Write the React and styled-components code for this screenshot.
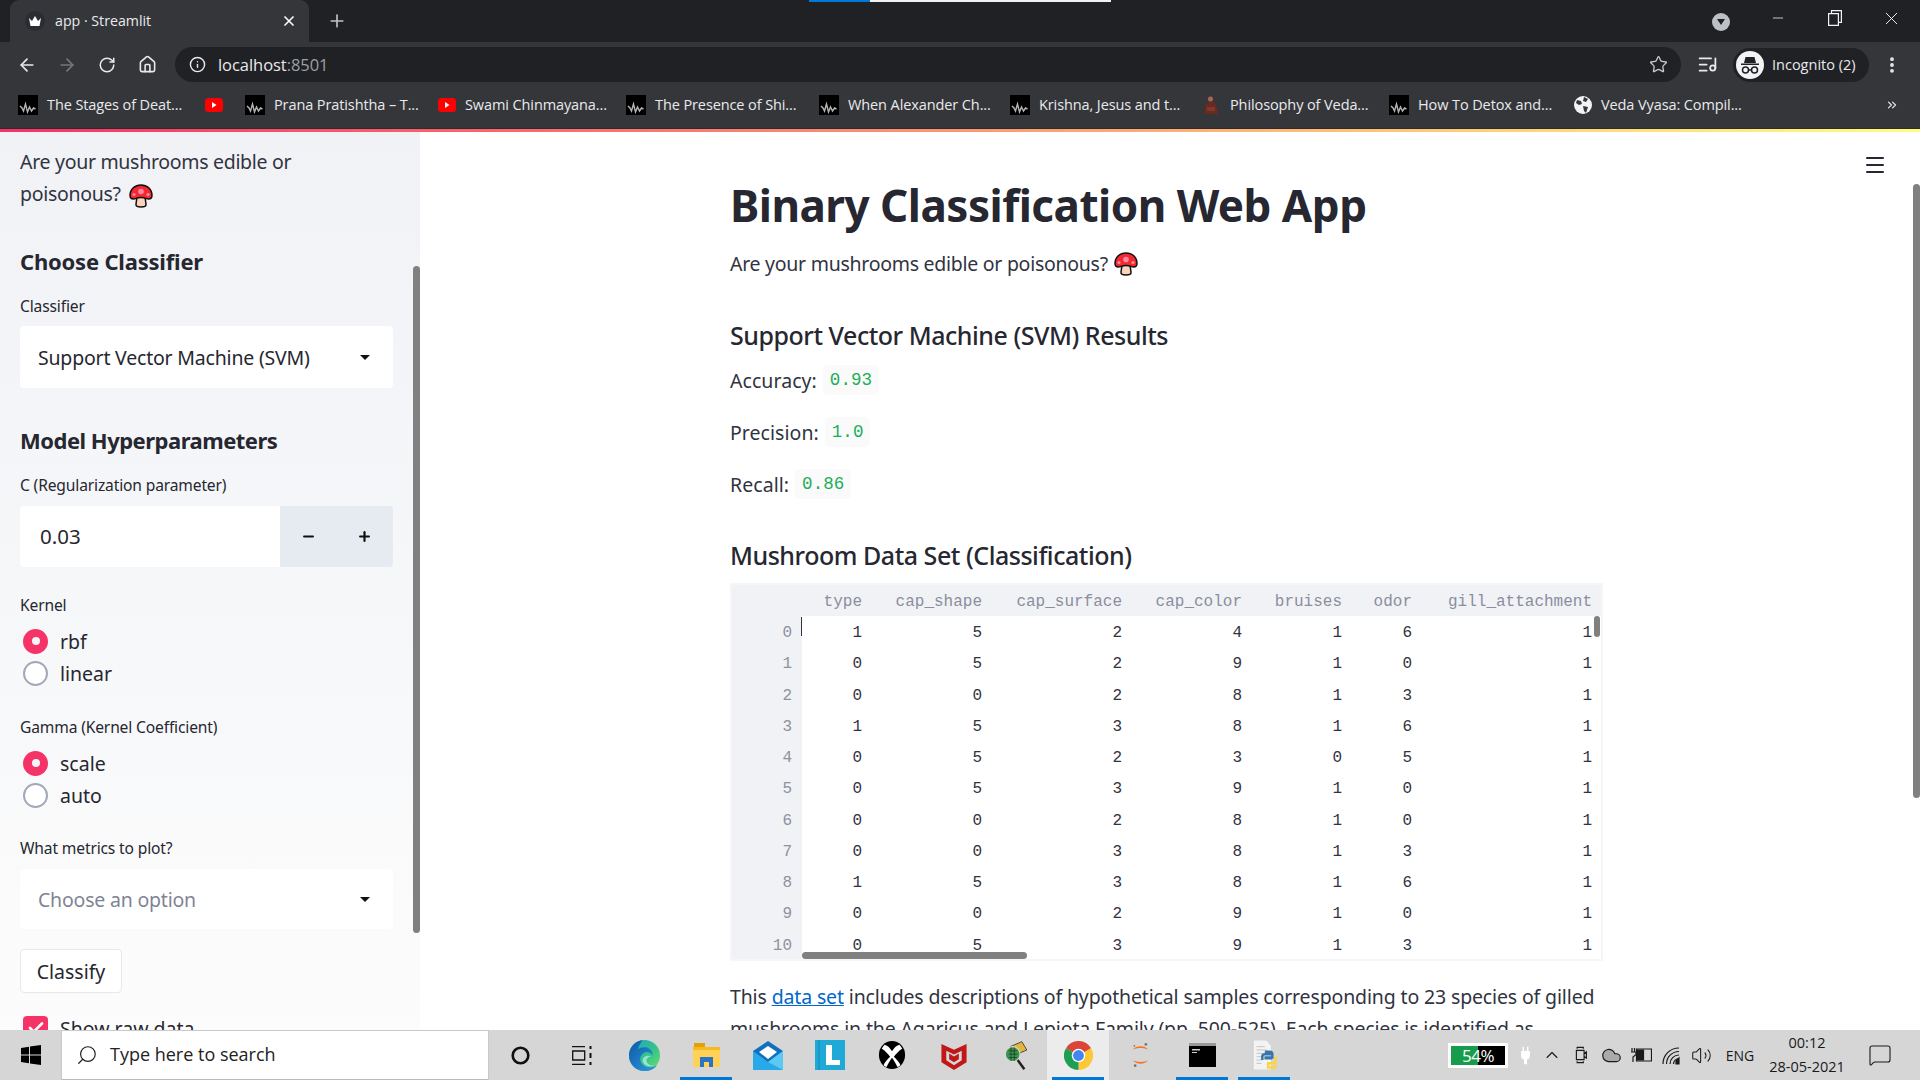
import React from "react";
import styled, { createGlobalStyle } from "styled-components";
import {
  ArrowLeft, ArrowRight, RotateCw, Home, Info, Star, ListMusic, MoreVertical, Menu, Plus, X, Minus,
  ChevronUp, Cloud, Volume2, MessageSquare, Search, Check, ChevronsRight
} from "lucide-react";

const SANS = `"Noto Sans", "Liberation Sans", sans-serif`;
const UI = `"Open Sans", "Liberation Sans", sans-serif`;
const MONO = `"Liberation Mono", monospace`;

const Global = createGlobalStyle`
  html, body { margin: 0; padding: 0; height: 100%; overflow: hidden; background: #fff; }
  #root { height: 100%; }
  * { box-sizing: border-box; }
`;

const Page = styled.div`display:flex;flex-direction:column;width:1920px;height:1080px;overflow:hidden;font-family:${SANS};color:#262730;`;

/* browser chrome */
const TabStrip = styled.div`position:relative;display:flex;align-items:stretch;height:42px;background:#202124;color:#fff;font-family:${UI};`;
const Progress = styled.div`position:absolute;top:0;left:${p => p.$left}px;width:${p => p.$width}px;height:2px;background:${p => p.$color};`;
const Tab = styled.div`display:flex;align-items:center;margin-left:10px;width:299px;background:#35363a;border-radius:9px 9px 0 0;padding:0 12px 0 15px;font-size:14.2px;color:#e8eaed;`;
const TabIcon = styled.span`display:flex;align-items:center;justify-content:center;width:20px;height:20px;border-radius:50%;background:#2a2b33;margin-right:10px;`;
const TabTitle = styled.span`flex:1;margin-bottom:2px;`;
const NewTab = styled.span`display:flex;align-items:center;margin-left:18px;color:#bdc1c6;`;
const Spacer = styled.div`flex:1;`;
const ProfileDot = styled.span`display:flex;align-items:center;justify-content:center;width:56px;height:44px;`;
const DotCircle = styled.span`width:18px;height:18px;border-radius:50%;background:#bdc1c6;display:flex;align-items:center;justify-content:center;`;
const DotArrow = styled.span`width:0;height:0;border-left:4.5px solid transparent;border-right:4.5px solid transparent;border-top:6px solid #202124;`;
const WinButton = styled.span`display:flex;align-items:center;justify-content:center;width:57px;height:36px;color:#f1f3f4;`;

const Toolbar = styled.div`display:flex;align-items:center;height:45px;padding-left:7px;background:#35363a;`;
const NavButton = styled.span`display:flex;align-items:center;justify-content:center;width:40px;color:${p => (p.$dim ? "#75777b" : "#e8eaed")};`;
const AddressBar = styled.div`display:flex;align-items:center;margin-left:8px;width:1506px;height:35px;border-radius:18px;background:#202124;padding:0 13px 0 14px;color:#e8eaed;font-family:${UI};font-size:16.5px;`;
const Host = styled.span`margin-left:12px;flex:1;letter-spacing:-.05px;`;
const Port = styled.span`color:#9aa0a6;`;
const StarWrap = styled.span`display:flex;color:#c4c7ca;`;
const MediaButton = styled.span`display:flex;justify-content:center;width:52px;color:#e8eaed;`;
const Pill = styled.div`display:flex;align-items:center;width:136px;height:34px;border-radius:17px;background:#202124;padding-left:3px;color:#e8eaed;font-family:${UI};font-size:14.5px;`;
const PillText = styled.span`margin-left:8px;`;
const DotsButton = styled.span`display:flex;justify-content:center;width:46px;color:#e8eaed;`;

const Bookmarks = styled.div`display:flex;align-items:flex-start;height:42px;padding:0 0 0 18px;background:#35363a;color:#e8eaed;font-family:${UI};font-size:14.5px;border-bottom:1px solid #2b2c2f;`;
const Bookmark = styled.div`display:flex;align-items:center;height:36px;width:${p => p.$width}px;flex:none;white-space:nowrap;letter-spacing:-.1px;`;
const BookmarkLabel = styled.span`margin-left:${p => p.$gap || 9}px;margin-bottom:2px;`;
const More = styled.span`display:flex;align-items:center;height:36px;margin-left:auto;margin-right:21px;color:#e8eaed;`;
const Rainbow = styled.div`height:3px;background:linear-gradient(90deg,#f63366,#fffd80);`;

/* app */
const AppArea = styled.div`position:relative;display:flex;flex:1;min-height:0;overflow:hidden;background:#fff;`;
const Sidebar = styled.aside`position:relative;width:420px;flex:none;padding:14px 27px 0 20px;background:linear-gradient(180deg,#f0f2f6,#fcfcfc);overflow:hidden;`;
const ScrollThumbSide = styled.div`position:absolute;right:0;top:134px;width:7px;height:667px;border-radius:4px;background:#808080;`;
const SideText = styled.p`margin:0;font-size:19.5px;line-height:32px;color:#31333f;letter-spacing:-.3px;`;
const SideTitle = styled.h3`margin:${p => p.$mt}px 0 0;font-size:22px;line-height:30px;font-weight:700;color:#262730;letter-spacing:${p => p.$ls}px;`;
const FieldLabel = styled.div`margin-top:${p => p.$mt}px;font-size:15.6px;line-height:20px;color:#262730;letter-spacing:-.15px;`;
const SelectBox = styled.div`display:flex;align-items:center;justify-content:space-between;margin-top:${p => p.$mt}px;height:${p => p.$h}px;background:#fff;border-radius:4px;padding:0 23px 0 18px;font-size:19.5px;letter-spacing:-.2px;color:${p => (p.$placeholder ? "#7f8495" : "#262730")};`;
const Caret = styled.span`width:0;height:0;border-left:5px solid transparent;border-right:5px solid transparent;border-top:5px solid #111;`;
const NumberField = styled.div`display:flex;margin-top:11px;height:61px;border-radius:4px;overflow:hidden;`;
const NumberValue = styled.div`display:flex;align-items:center;width:260px;background:#fff;padding:0 0 2px 20px;font-size:20.5px;`;
const Stepper = styled.div`display:flex;flex:1;background:#e6eaf1;`;
const StepButton = styled.span`display:flex;align-items:center;justify-content:center;flex:1;color:#111;`;
const RadioGroup = styled.div`margin-top:10px;`;
const OptionRow = styled.div`display:flex;align-items:center;height:32px;font-size:19.5px;padding-left:3px;margin-top:${p => p.$mt || 0}px;`;
const Radio = styled.span`display:flex;align-items:center;justify-content:center;width:25px;height:25px;border-radius:50%;margin-right:12px;background:${p => (p.$on ? "#f63366" : "#fff")};border:${p => (p.$on ? "none" : "2px solid #a3a8b8")};`;
const RadioDot = styled.span`width:8px;height:8px;border-radius:50%;background:#f3f4f7;`;
const Checkbox = styled.span`display:flex;align-items:center;justify-content:center;width:25px;height:25px;border-radius:4px;margin-right:12px;background:#f63366;color:#fff;`;
const ActionButton = styled.div`display:flex;align-items:center;justify-content:center;margin-top:20px;width:102px;height:44px;border:1px solid #e6e8ee;border-radius:4px;background:#fff;font-size:19.5px;`;

const Main = styled.main`position:relative;flex:1;padding:45px 0 0 310px;overflow:hidden;`;
const Column = styled.div`width:873px;`;
const HamburgerWrap = styled.span`position:absolute;top:21px;right:33px;display:flex;color:#262730;`;
const MainThumb = styled.div`position:absolute;right:0;top:52px;width:7px;height:614px;border-radius:4px;background:#808080;`;
const Title = styled.h1`margin:0;font-size:44px;line-height:56px;font-weight:700;color:#262730;white-space:nowrap;letter-spacing:-.5px;`;
const Tagline = styled.p`margin:15px 0 0;font-size:19.5px;line-height:32px;color:#31333f;display:flex;align-items:center;letter-spacing:-.27px;white-space:pre;`;
const SubTitle = styled.h3`margin:${p => p.$mt}px 0 0;font-size:25px;line-height:40px;font-weight:500;color:#262730;letter-spacing:-.47px;`;
const MetricRow = styled.div`display:flex;align-items:center;margin-top:${p => p.$mt}px;height:32px;font-size:19.5px;letter-spacing:.05px;color:#31333f;`;
const Code = styled.code`display:inline-flex;align-items:center;height:30px;margin-left:6px;padding:0 7px;border-radius:5px;background:#fafafa;color:#1aae57;font-family:${MONO};font-size:17.5px;`;
const Mush = styled.span`display:inline-flex;vertical-align:middle;margin:-6px 0 -6px 4px;`;
const TagMush = styled.span`display:inline-flex;margin-left:1px;`;

const DataFrame = styled.div`position:relative;margin-top:8px;width:873px;height:378px;border:2px solid #f6f6f6;overflow:hidden;`;
const Grid = styled.div`display:grid;grid-template-columns:70px 70px 120px 140px 120px 100px 70px 180px;grid-template-rows:31px;grid-auto-rows:31.25px;font-family:${MONO};font-size:16px;`;
const HeadCell = styled.div`display:flex;align-items:center;justify-content:flex-end;padding:3px 10px 0 0;background:#f0f2f6;color:#8b8e9c;`;
const IndexCell = styled.div`display:flex;align-items:center;justify-content:flex-end;padding:3px 10px 0 0;background:#f0f2f6;color:#8f919c;`;
const DataCell = styled.div`display:flex;align-items:center;justify-content:flex-end;padding:3px 10px 0 0;background:#fff;color:#31333f;`;
const HThumb = styled.div`position:absolute;left:70px;bottom:0;width:225px;height:7px;border-radius:4px;background:#808080;`;
const VThumb = styled.div`position:absolute;right:1px;top:31px;width:6px;height:21px;border-radius:3px;background:#808080;`;
const CellCursor = styled.div`position:absolute;left:69px;top:32px;width:1px;height:19px;background:#31333f;`;
const Paragraph = styled.p`margin:20px 0 0;font-size:19.5px;line-height:32px;color:#31333f;white-space:nowrap;letter-spacing:-.14px;`;
const Link = styled.a`color:#0068c9;text-decoration:underline;`;

/* taskbar */
const Taskbar = styled.div`display:flex;align-items:stretch;height:50px;flex:none;background:#d6d6d6;font-family:${UI};color:#111;`;
const StartButton = styled.span`display:flex;align-items:center;justify-content:center;width:61px;`;
const SearchBox = styled.div`display:flex;align-items:center;width:428px;background:#fff;border:1px solid #c9c9c9;border-bottom-color:#bbb;padding-left:14px;font-size:18px;color:#222;`;
const SearchLabel = styled.span`margin-left:12px;margin-bottom:2px;`;
const MagnifierFlip = styled.span`display:flex;transform:scaleX(-1);`;
const TaskIcon = styled.span`position:relative;display:flex;align-items:center;justify-content:center;width:62px;flex:none;background:${p => (p.$active ? "#ececec" : "transparent")};`;
const Underline = styled.span`position:absolute;left:5px;right:5px;bottom:0;height:3px;background:#0078d7;`;
const Tray = styled.div`display:flex;align-items:center;margin-left:auto;padding-right:10px;`;
const Meter = styled.div`display:flex;position:relative;width:60px;height:25px;border:3px solid #fff;margin-right:4px;background:linear-gradient(90deg,#169c4b 50%,#000 50%);color:#fff;font-size:17px;align-items:center;justify-content:center;letter-spacing:-.5px;`;
const TrayItem = styled.span`display:flex;align-items:center;justify-content:center;height:50px;width:${p => p.$w}px;font-size:${p => p.$fs || 14}px;color:#1a1a1a;`;
const Clock = styled.span`display:flex;flex-direction:column;align-items:center;justify-content:center;width:86px;height:50px;font-size:14.5px;line-height:24px;color:#1a1a1a;`;

const Wave = () => (
  <svg width="20" height="20" viewBox="0 0 20 20"><rect width="20" height="20" fill="#000" />
    <path d="M2 11l2 2 1.500 3 2-7 2 8 2-5 2 4 2-3 2 1" fill="none" stroke="#b5b5b5" strokeWidth="1.400" /></svg>
);
const YouTube = () => (
  <svg width="18" height="14" viewBox="0 0 18 14"><rect width="18" height="14" rx="3.500" fill="#f00" /><path d="M7 4l4.500 3L7 10z" fill="#fff" /></svg>
);
const Statue = () => (
  <svg width="20" height="20" viewBox="0 0 20 20"><path d="M7 1h5l-1 5 4 3 2 10H3l2-10 3-3z" fill="#6a2a20" /><circle cx="9.500" cy="4" r="2.500" fill="#9a6a5e" /><path d="M6 12h8v4H6z" fill="#7d3a2c" /></svg>
);
const Globe = () => (
  <svg width="18" height="18" viewBox="0 0 18 18"><circle cx="9" cy="9" r="9" fill="#f1f3f4" /><path d="M3 4l4 1 1 3-3 1-3-2zM10 1l4 2-2 3-3-1zM9 10l5 1-2 6-2-2z" fill="#35363a" /></svg>
);
const Mushroom = () => (
  <svg width="24" height="24" viewBox="0 0 24 24">
    <path d="M8 13h8l1 7c.3 2.500-1.500 3-5 3s-5.300-.5-5-3z" fill="#f9d3bc" stroke="#111" strokeWidth="1.500" />
    <path d="M1 11.500C1 5 6 1 12 1s11 4 11 10.500c0 2.500-1.500 3.500-3.500 3.500-2.500 0-3-1.500-7.500-1.500S7 15 4.500 15C2.500 15 1 14 1 11.500z" fill="#f4282f" stroke="#111" strokeWidth="1.500" />
    <circle cx="12" cy="7.500" r="2.800" fill="#f98aa5" /><circle cx="5" cy="10.500" r="1.600" fill="#f98aa5" /><circle cx="19" cy="10.500" r="1.600" fill="#f98aa5" />
  </svg>
);
const Incognito = () => (
  <svg width="28" height="28" viewBox="0 0 28 28"><circle cx="14" cy="14" r="14" fill="#f1f3f4" />
    <path d="M9.500 6h9l1.500 6H8zM5 12.500h18V14H5z" fill="#202124" />
    <circle cx="9.500" cy="19" r="3" fill="none" stroke="#202124" strokeWidth="1.500" /><circle cx="18.500" cy="19" r="3" fill="none" stroke="#202124" strokeWidth="1.500" /><path d="M12.500 19h3" stroke="#202124" strokeWidth="1.500" />
  </svg>
);
const Crown = () => (
  <svg width="14" height="12" viewBox="0 0 14 12"><path d="M1 3l3 3 3-5 3 5 3-3-1.500 8h-9z" fill="#fff" /></svg>
);
const RestoreIcon = () => (
  <svg width="14" height="16" viewBox="0 0 14 16" fill="none" stroke="currentColor" strokeWidth="1.200"><path d="M.6 3.600h9.800v11.800H.6zM3.500 3.500V.6h9.900v11.800h-3" /></svg>
);
const WindowsLogo = () => (
  <svg width="20" height="20" viewBox="0 0 20 20" fill="#000"><path d="M0 3l8-1.200V9.500H0zM9 1.600L20 0v9.500H9zM0 10.500h8v7.700L0 17zM9 10.500h11V20L9 18.400z" /></svg>
);
const TaskViewIcon = () => (
  <svg width="21" height="19" viewBox="0 0 21 19" fill="none" stroke="#111" strokeWidth="1.300"><path d="M0 .7h13M0 18.300h13M.7 5h12v9H.7z" /><path d="M18.500 0v3M18.500 7v5M18.500 16v3" strokeWidth="2" /></svg>
);
const CortanaIcon = () => (
  <svg width="19" height="19" viewBox="0 0 19 19"><circle cx="9.500" cy="9.500" r="7.800" fill="none" stroke="#111" strokeWidth="2.600" /></svg>
);
const EdgeIcon = () => (
  <svg width="31" height="31" viewBox="0 0 32 32">
    <defs><linearGradient id="eg" x1="0" y1="0" x2="1" y2="1"><stop offset="0" stopColor="#1fa2c8" /><stop offset=".55" stopColor="#35c38a" /><stop offset="1" stopColor="#6ee06a" /></linearGradient>
      <linearGradient id="eb" x1="0" y1="0" x2="1" y2="1"><stop offset="0" stopColor="#0c59a4" /><stop offset="1" stopColor="#2f9ae0" /></linearGradient></defs>
    <circle cx="16" cy="16" r="16" fill="url(#eg)" />
    <path d="M14 0C6 1 0 8 0 16c0 9 7 16 16 16 6 0 10-2 13-6-5 3-13 3-16-2-3-4-1-9 3-11 3-1.500 7 0 8 3 1-2 0-5-3-7-3-2-9-2-12 1 1-4 3-7 5-10z" fill="url(#eb)" />
    <path d="M23 17c-4-2-9 0-9 4 0 4 5 7 11 6l4-1c-6 2-11-1-11-5 0-2 2-4 5-4z" fill="#bfeef2" opacity=".7" />
  </svg>
);
const FolderIcon = () => (
  <svg width="27" height="24" viewBox="0 0 27 24"><path d="M1 0h11v4H1z" fill="#e3a008" /><path d="M0 4h27v20H0z" fill="#ffd257" /><path d="M0 4h27v3H0z" fill="#f5b921" /><path d="M7 14h13v10h-4v-5h-5v5H7z" fill="#2a73c5" /></svg>
);
const MailIcon = () => (
  <svg width="30" height="29" viewBox="0 0 30 29"><path d="M0 10L15 0l15 10v19H0z" fill="#0f6fc0" /><path d="M6 11l9-6 9 6-9 7z" fill="#fff" /><path d="M0 10l15 11 15-11v19H0z" fill="#29a9e8" /><path d="M15 21l15-11v19z" fill="#5cc9f5" /></svg>
);
const LIcon = () => (
  <svg width="30" height="30" viewBox="0 0 30 30"><rect width="30" height="30" fill="#1fa9d6" /><path d="M11 5h6v15h8v5H11z" fill="#fff" /><path d="M3 0h2v30H3z" fill="#178dbd" opacity=".6" /></svg>
);
const XboxIcon = () => (
  <svg width="28" height="28" viewBox="0 0 28 30"><ellipse cx="14" cy="15" rx="14" ry="15" fill="#000" /><path d="M6 4c4 1 6 4 8 7 2-3 4-6 8-7l3 4c-4 3-7 6-9 9 3 3 6 6 7 9l-3 2c-2-4-4-7-6-10-2 3-4 6-6 10l-3-2c1-3 4-6 7-9-2-3-5-6-9-9z" fill="#fff" /></svg>
);
const McAfeeIcon = () => (
  <svg width="26" height="29" viewBox="0 0 26 30"><path d="M0 3l13 6 13-6v19l-13 8-13-8z" fill="#c01818" /><path d="M5 10l8 4 8-4v10l-8 5-8-5z" fill="#d6d6d6" /><path d="M8 13l5 3 5-3v6l-5 3-5-3z" fill="#c01818" /></svg>
);
const SpyIcon = () => (
  <svg width="30" height="30" viewBox="0 0 30 36"><path d="M8 8l14-6 6 10-14 6z" fill="#e2b53e" stroke="#333" strokeWidth="1" /><circle cx="11" cy="17" r="9" fill="#2f8f3c" opacity=".9" stroke="#ddd" strokeWidth="1.500" /><path d="M6 13h10M6 17h10M6 21h10M9 9v16M13 9v16" stroke="#133" strokeWidth=".8" /><path d="M17 24l8 11" stroke="#222" strokeWidth="3" /></svg>
);
const ChromeIcon = () => (
  <svg width="29" height="29" viewBox="0 0 32 32"><path d="M16 16L2.140 8A16 16 0 0 1 29.860 8z" fill="#db4437" /><path d="M16 16L29.860 8A16 16 0 0 1 16 32z" fill="#fcc934" /><path d="M16 16L16 32A16 16 0 0 1 2.140 8z" fill="#1e9e50" /><circle cx="16" cy="16" r="7.500" fill="#fff" /><circle cx="16" cy="16" r="6" fill="#4285f4" /></svg>
);
const JupyterIcon = () => (
  <svg width="21" height="26" viewBox="0 0 24 34"><path d="M2 10c4-6 16-6 20 0-5-3-15-3-20 0zM2 24c4 6 16 6 20 0-5 3-15 3-20 0z" fill="#f37726" /><circle cx="19" cy="3" r="1.800" fill="#767677" /><circle cx="4" cy="5" r="1.200" fill="#767677" /><circle cx="5" cy="31" r="1.800" fill="#767677" /></svg>
);
const TerminalIcon = () => (
  <svg width="27" height="24" viewBox="0 0 27 24"><rect width="27" height="24" fill="#000" /><rect width="27" height="3" fill="#9a9a9a" /><path d="M3 6h8v1.500H3zM3 9h5v1H3z" fill="#ccc" /></svg>
);
const PythonFileIcon = () => (
  <svg width="30" height="30" viewBox="0 0 30 36"><path d="M2 0h16l6 7v29H2z" fill="#f3f3f3" stroke="#ccc" /><path d="M6 8h10M6 12h12M6 16h8M6 20h7M6 24h6M6 28h6" stroke="#bbb" strokeWidth="1" /><path d="M16 14h6a3 3 0 0 1 3 3v4h-8v1h6v-2M13 24v-4a3 3 0 0 1 3-3h9" fill="none" stroke="#3776ab" strokeWidth="3" /><path d="M29 20v5a3 3 0 0 1-3 3h-6v5h5a3 3 0 0 0 4-3" fill="none" stroke="#ffd43b" strokeWidth="3" /></svg>
);
const PlugWhite = () => (
  <svg width="11" height="19" viewBox="0 0 14 26" fill="#fff"><path d="M3 1h2v6H3zM9 1h2v6H9zM1 7h12v7c0 2.500-2 4-4 4.500V25H5v-6.500C3 18 1 16.500 1 14z" /></svg>
);
const BatteryIcon = () => (
  <svg width="22" height="16" viewBox="0 0 22 16" fill="none" stroke="#1a1a1a" strokeWidth="1.200"><path d="M6.500 2h15v12h-15z" /><path d="M7.500 3h6v10h-6z" fill="#1a1a1a" /><path d="M2 1v4M4.500 1v4M1 5h5v2.500L3 10v5" /></svg>
);
const MeetIcon = () => (
  <svg width="14" height="20" viewBox="0 0 16 26" fill="none" stroke="#1a1a1a" strokeWidth="1.500"><path d="M3 5V3h8v2M3 21v2h8v-2" /><path d="M2 7h10v12H2zM12 11l3-2v8l-3-2" /></svg>
);
const WifiIcon = () => (
  <svg width="22" height="20" viewBox="0 0 22 20" fill="none" stroke="#1a1a1a" strokeWidth="1.200"><path d="M3 19C3 10 10 3 19 3M6.500 19c0-7 5.500-12.500 12.500-12.500M10 19c0-5 4-9 9-9M13.500 19c0-3 2.500-5.500 5.500-5.500" /><path d="M16 16l3-3v6h-3z" fill="#1a1a1a" /></svg>
);

const bookmarks = [
  { w: 187, icon: <Wave />, label: "The Stages of Deat..." },
  { w: 40, icon: <YouTube /> },
  { w: 193, icon: <Wave />, label: "Prana Pratishtha – T..." },
  { w: 188, icon: <YouTube />, label: "Swami Chinmayana..." },
  { w: 193, icon: <Wave />, label: "The Presence of Shi..." },
  { w: 191, icon: <Wave />, label: "When Alexander Ch..." },
  { w: 191, icon: <Wave />, label: "Krishna, Jesus and t..." },
  { w: 188, icon: <Statue />, label: "Philosophy of Veda..." },
  { w: 185, icon: <Wave />, label: "How To Detox and..." },
  { w: 200, icon: <Globe />, label: "Veda Vyasa: Compil..." },
];

const columns = ["type", "cap_shape", "cap_surface", "cap_color", "bruises", "odor", "gill_attachment"];
const rows = [
  [1, 5, 2, 4, 1, 6, 1], [0, 5, 2, 9, 1, 0, 1], [0, 0, 2, 8, 1, 3, 1], [1, 5, 3, 8, 1, 6, 1],
  [0, 5, 2, 3, 0, 5, 1], [0, 5, 3, 9, 1, 0, 1], [0, 0, 2, 8, 1, 0, 1], [0, 0, 3, 8, 1, 3, 1],
  [1, 5, 3, 8, 1, 6, 1], [0, 0, 2, 9, 1, 0, 1], [0, 5, 3, 9, 1, 3, 1],
];

const taskIcons = [
  { el: <CortanaIcon /> }, { el: <TaskViewIcon /> }, { el: <EdgeIcon /> }, { el: <FolderIcon />, open: true },
  { el: <MailIcon /> }, { el: <LIcon /> }, { el: <XboxIcon /> }, { el: <McAfeeIcon /> }, { el: <SpyIcon /> },
  { el: <ChromeIcon />, open: true, active: true }, { el: <JupyterIcon /> }, { el: <TerminalIcon />, open: true }, { el: <PythonFileIcon />, open: true },
];

export default function App() {
  return (
    <Page>
      <Global />
      <TabStrip>
        <Progress $left={809} $width={61} $color="#0078d7" />
        <Progress $left={870} $width={241} $color="#f2f2f2" />
        <Tab>
          <TabIcon><Crown /></TabIcon>
          <TabTitle>app · Streamlit</TabTitle>
          <X size={16} strokeWidth={2.5} color="#fff" />
        </Tab>
        <NewTab><Plus size={20} strokeWidth={2} /></NewTab>
        <Spacer />
        <ProfileDot><DotCircle><DotArrow /></DotCircle></ProfileDot>
        <WinButton><Minus size={16} strokeWidth={1.2} /></WinButton>
        <WinButton><RestoreIcon /></WinButton>
        <WinButton><X size={21} strokeWidth={1.1} /></WinButton>
      </TabStrip>
      <Toolbar>
        <NavButton><ArrowLeft size={20} /></NavButton>
        <NavButton $dim><ArrowRight size={20} /></NavButton>
        <NavButton><RotateCw size={18} /></NavButton>
        <NavButton><Home size={19} /></NavButton>
        <AddressBar>
          <Info size={17} />
          <Host>localhost<Port>:8501</Port></Host>
          <StarWrap><Star size={19} strokeWidth={1.7} /></StarWrap>
        </AddressBar>
        <MediaButton><ListMusic size={21} /></MediaButton>
        <Pill><Incognito /><PillText>Incognito (2)</PillText></Pill>
        <DotsButton><MoreVertical size={20} strokeWidth={2.6} /></DotsButton>
      </Toolbar>
      <Bookmarks>
        {bookmarks.map((b, i) => (
          <Bookmark key={i} $width={b.w}>
            {b.icon}
            {b.label && <BookmarkLabel>{b.label}</BookmarkLabel>}
          </Bookmark>
        ))}
        <More><ChevronsRight size={14} strokeWidth={2} /></More>
      </Bookmarks>
      <Rainbow />
      <AppArea>
        <Sidebar>
          <ScrollThumbSide />
          <SideText>Are your mushrooms edible or<br />poisonous? <Mush><Mushroom /></Mush></SideText>
          <SideTitle $mt={36} $ls={-0.2}>Choose Classifier</SideTitle>
          <FieldLabel $mt={20}>Classifier</FieldLabel>
          <SelectBox $mt={10} $h={62}>Support Vector Machine (SVM)<Caret /></SelectBox>
          <SideTitle $mt={37} $ls={-0.5}>Model Hyperparameters</SideTitle>
          <FieldLabel $mt={20}>C (Regularization parameter)</FieldLabel>
          <NumberField>
            <NumberValue>0.03</NumberValue>
            <Stepper>
              <StepButton><Minus size={15} strokeWidth={3.5} /></StepButton>
              <StepButton><Plus size={15} strokeWidth={3.5} /></StepButton>
            </Stepper>
          </NumberField>
          <FieldLabel $mt={28}>Kernel</FieldLabel>
          <RadioGroup>
            <OptionRow><Radio $on><RadioDot /></Radio>rbf</OptionRow>
            <OptionRow><Radio />linear</OptionRow>
          </RadioGroup>
          <FieldLabel $mt={28}>Gamma (Kernel Coefficient)</FieldLabel>
          <RadioGroup>
            <OptionRow><Radio $on><RadioDot /></Radio>scale</OptionRow>
            <OptionRow><Radio />auto</OptionRow>
          </RadioGroup>
          <FieldLabel $mt={27}>What metrics to plot?</FieldLabel>
          <SelectBox $mt={11} $h={60} $placeholder>Choose an option<Caret /></SelectBox>
          <ActionButton>Classify</ActionButton>
          <OptionRow $mt={19}><Checkbox><Check size={18} strokeWidth={3.5} /></Checkbox>Show raw data</OptionRow>
        </Sidebar>
        <Main>
          <HamburgerWrap><Menu size={24} strokeWidth={2} /></HamburgerWrap>
          <MainThumb />
          <Column>
            <Title>Binary Classification Web App</Title>
            <Tagline>Are your mushrooms edible or poisonous? <TagMush><Mushroom /></TagMush></Tagline>
            <SubTitle $mt={35}>Support Vector Machine (SVM) Results</SubTitle>
            <MetricRow $mt={9}>Accuracy: <Code>0.93</Code></MetricRow>
            <MetricRow $mt={20}>Precision: <Code>1.0</Code></MetricRow>
            <MetricRow $mt={20}>Recall: <Code>0.86</Code></MetricRow>
            <SubTitle $mt={35}>Mushroom Data Set (Classification)</SubTitle>
            <DataFrame>
              <Grid>
                <HeadCell />
                {columns.map(c => <HeadCell key={c}>{c}</HeadCell>)}
                {rows.map((r, i) => (
                  <React.Fragment key={i}>
                    <IndexCell>{i}</IndexCell>
                    {r.map((v, j) => <DataCell key={j}>{v}</DataCell>)}
                  </React.Fragment>
                ))}
              </Grid>
              <CellCursor />
              <HThumb />
              <VThumb />
            </DataFrame>
            <Paragraph>
              This <Link>data set</Link> includes descriptions of hypothetical samples corresponding to 23 species of gilled<br />
              mushrooms in the Agaricus and Lepiota Family (pp. 500-525). Each species is identified as
            </Paragraph>
          </Column>
        </Main>
      </AppArea>
      <Taskbar>
        <StartButton><WindowsLogo /></StartButton>
        <SearchBox><MagnifierFlip><Search size={22} strokeWidth={1.3} /></MagnifierFlip><SearchLabel>Type here to search</SearchLabel></SearchBox>
        {taskIcons.map((t, i) => (
          <TaskIcon key={i} $active={t.active}>{t.el}{t.open && <Underline />}</TaskIcon>
        ))}
        <Tray>
          <Meter>54%</Meter>
          <TrayItem $w={26}><PlugWhite /></TrayItem>
          <TrayItem $w={28}><ChevronUp size={20} strokeWidth={1.3} /></TrayItem>
          <TrayItem $w={30}><MeetIcon /></TrayItem>
          <TrayItem $w={30}><Cloud size={21} strokeWidth={1.3} fill="#aaa" /></TrayItem>
          <TrayItem $w={30}><BatteryIcon /></TrayItem>
          <TrayItem $w={30}><WifiIcon /></TrayItem>
          <TrayItem $w={30}><Volume2 size={21} strokeWidth={1.2} /></TrayItem>
          <TrayItem $w={48} $fs={14}>ENG</TrayItem>
          <Clock><span>00:12</span><span>28-05-2021</span></Clock>
          <TrayItem $w={60}><MessageSquare size={24} strokeWidth={1.1} /></TrayItem>
        </Tray>
      </Taskbar>
    </Page>
  );
}
